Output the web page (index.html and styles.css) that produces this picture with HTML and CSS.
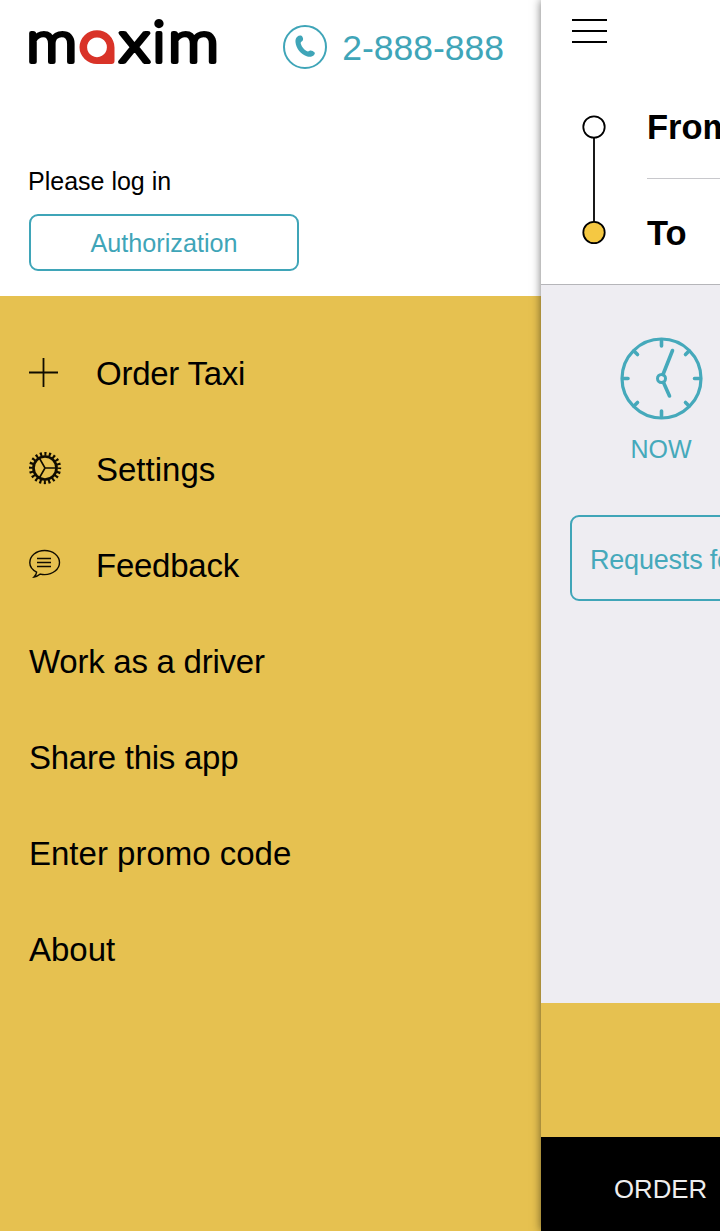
FILE: index.html
```html
<!DOCTYPE html>
<html lang="en">
<head>
    <meta charset="UTF-8">
    <meta name="viewport" content="width=device-width, initial-scale=1.0">
    <title>maxim</title>
    <link rel="stylesheet" href="styles.css">
</head>
<body>
    <div class="app">
        <aside class="sidebar">
            <header class="top">
                <div class="brand">
                    <svg class="logo" width="192" height="78" viewBox="0 -14 192 78">
                        <g class="logo-text">
                            <text x="-1.800" y="46" textLength="51" lengthAdjust="spacingAndGlyphs">m</text>
                            <text x="91" y="46" textLength="31" lengthAdjust="spacingAndGlyphs">x</text>
                            <text x="124.500" y="46">i</text>
                            <text x="140" y="46" textLength="51" lengthAdjust="spacingAndGlyphs">m</text>
                        </g>
                        <path fill="#d93328" fill-rule="evenodd" d="M69 14.300a17.500 17.200 0 0 1 17.500 17.200V45q0 3-3 3H69a17.500 16.850 0 0 1 0-33.700zM69 21.400a9.900 9.900 0 1 0 .01 0z"/>
                    </svg>
                    <a class="phone" href="#">
                        <svg width="44" height="44" viewBox="0 0 44 44">
                            <circle cx="22" cy="22" r="21" fill="none" stroke="#3fa5b8" stroke-width="2"/>
                            <path fill="#3fa5b8" d="M14 12c2-1.900 4.500-1.900 5.500-.1 1 1.800.8 3.600-.8 4.500-1 .6-1.200 1.300-.8 2.500 1 3 3 5.400 5.700 7.100 1 .6 1.800.5 2.600 0 1.200-.8 2.300-.6 3.500.1l1.300.8c1.200.7 1 1.900.2 2.900-1.600 2-4.300 2.500-6.900 1.700-6.400-2-11.200-8-11.800-14.300-.2-2 .2-4.100 1.500-5.200z"/>
                        </svg>
                        <span>2-888-888</span>
                    </a>
                </div>
                <p class="hint">Please log in</p>
                <button class="auth">Authorization</button>
            </header>
            <nav>
                <ul class="menu">
                    <li class="tight">
                        <svg class="icon" width="34" height="34" viewBox="0 0 34 34">
                            <path d="M0 16.500h29M14.500 2v29" fill="none" stroke="#100c00" stroke-width="1.800"/>
                        </svg>
                        Order Taxi
                    </li>
                    <li>
                        <svg class="icon" width="34" height="34" viewBox="0 0 34 34">
                            <g fill="none" stroke="#100c00">
                                <circle cx="16" cy="16" r="14.200" stroke-width="3.900" stroke-dasharray="2.100 2.361" stroke-dashoffset="1.050"/>
                                <circle cx="16" cy="16" r="11.500" stroke-width="2.700"/>
                                <path d="M16 16h11.500M16 16l-5.700-10M16 16l-5.700 10" stroke-width="1.600"/>
                            </g>
                        </svg>
                        Settings
                    </li>
                    <li class="tight">
                        <svg class="icon" width="34" height="34" viewBox="0 0 34 34">
                            <g fill="none" stroke="#100c00" stroke-width="1.400">
                                <path d="M7.600 24.200C3.500 22 .8 18.500.8 14.800.8 7.800 7.300 2.500 15.600 2.500s14.900 5.300 14.900 12-6.600 12.100-14.900 12.100c-1.500 0-3-.2-4.300-.5-1.800 1.600-4 2.600-6.300 2.900 1.400-1.400 2.400-2.900 2.600-4.800z"/>
                                <path d="M8 10.500h14M8 14.500h14M8 18.500h14"/>
                            </g>
                        </svg>
                        Feedback
                    </li>
                    <li class="tight">Work as a driver</li>
                    <li class="tight">Share this app</li>
                    <li>Enter promo code</li>
                    <li>About</li>
                </ul>
            </nav>
        </aside>

        <main class="page">
            <section class="route">
                <div class="burger">
                    <span></span>
                    <span></span>
                    <span></span>
                </div>
                <div class="points">
                    <svg width="24" height="132" viewBox="0 0 24 132">
                        <g stroke="#000" stroke-width="1.800">
                            <path d="M12 24v84"/>
                            <circle cx="12" cy="13" r="10.700" fill="#fff"/>
                            <circle cx="12" cy="118.500" r="10.700" fill="#f5c842"/>
                        </g>
                    </svg>
                    <div class="fields">
                        <div class="field">From</div>
                        <div class="field">To</div>
                    </div>
                </div>
            </section>
            <section class="options">
                <div class="when">
                    <svg width="84" height="84" viewBox="0 0 84 84">
                        <g fill="none" stroke="#45a9bb" stroke-width="3.600" stroke-linecap="round">
                            <circle cx="42.500" cy="41.500" r="39.500" stroke-width="3.200"/>
                            <path d="M42.500 4v5M42.500 74v5M4 41.500h5M75.500 41.500h5M15 14l3.500 3.500M70 14l-3.500 3.500M15 69l3.500-3.500M70 69l-3.500-3.500"/>
                            <circle cx="42.500" cy="41.500" r="4" stroke-width="3"/>
                            <path d="M44 37.500l9.500-24M44.500 45.500l6 13.500"/>
                        </g>
                    </svg>
                    <span>NOW</span>
                </div>
                <div class="requests">Requests for driver</div>
            </section>
            <section class="price"></section>
            <footer class="order">ORDER</footer>
        </main>
    </div>
</body>
</html>
```

FILE: styles.css
```css
* {
    box-sizing: border-box;
}

body {
    margin: 0;
    font-family: "Liberation Sans", Arial, sans-serif;
    color: #000;
}

.app {
    display: flex;
    width: 720px;
    height: 1231px;
    overflow: hidden;
}

.sidebar {
    width: 541px;
    flex: none;
    background-color: #e6c150;
}

.top {
    height: 296px;
    padding: 16px 37px 0 28px;
    background-color: #fff;
}

.brand {
    display: flex;
    justify-content: space-between;
    height: 54px;
}

.logo {
    margin-top: -14px;
    overflow: visible;
}

.logo-text {
    font-family: Lato, sans-serif;
    font-size: 58px;
    font-weight: 300;
    stroke: #000;
    stroke-width: 4.2px;
    stroke-linejoin: round;
}

.phone {
    display: flex;
    gap: 15px;
    height: 44px;
    margin-top: 9px;
    font-size: 35.5px;
    line-height: 46px;
    color: #3fa5b8;
    text-decoration: none;
}

.hint {
    margin: 96px 0 0;
    font-size: 25px;
    line-height: 30px;
}

.auth {
    display: block;
    width: 270px;
    height: 57px;
    margin: 18px 0 0 1px;
    border: 2px solid #3fa5b8;
    border-radius: 9px;
    background-color: #fff;
    font-family: inherit;
    font-size: 25.2px;
    line-height: 53px;
    color: #3fa5b8;
}

.menu {
    margin: 0;
    padding: 30px 0 0 29px;
    list-style: none;
}

.menu li {
    display: flex;
    align-items: center;
    height: 96px;
    font-size: 33px;
}

.menu .tight {
    letter-spacing: -0.25px;
}

.icon {
    margin: -2px 33px 0 0;
}

.page {
    position: relative;
    display: flex;
    flex: none;
    flex-direction: column;
    width: 640px;
    box-shadow: 0 0 9px rgba(0, 0, 0, 0.55);
}

.route {
    height: 285px;
    padding: 19px 0 0 31px;
    border-bottom: 1px solid #b5b5b9;
    background-color: #fff;
}

.burger {
    display: grid;
    gap: 9px;
    width: 35px;
}

.burger span {
    height: 2px;
    background-color: #000;
}

.points {
    display: flex;
    gap: 41px;
    margin: 30px 0 0 10px;
}

.points svg {
    margin-top: 41px;
}

.fields {
    flex: 1;
}

.field {
    height: 106px;
    font-size: 34.5px;
    font-weight: bold;
    line-height: 108px;
}

.field:first-child {
    border-bottom: 1px solid #c8c8cc;
}

.options {
    height: 718px;
    padding: 52px 0 0 29px;
    background-color: #eeedf2;
    color: #45a9bb;
}

.when {
    display: flex;
    flex-direction: column;
    align-items: center;
    width: 84px;
    margin-left: 49px;
    font-size: 25px;
    line-height: 30px;
}

.when span {
    margin-top: 13px;
}

.requests {
    height: 86px;
    margin-top: 51px;
    padding-left: 18px;
    border: 2px solid #3fa5b8;
    border-radius: 9px;
    font-size: 27px;
    line-height: 86px;
    letter-spacing: -0.2px;
}

.price {
    height: 134px;
    background-color: #e6c150;
}

.order {
    height: 94px;
    padding-left: 73px;
    background-color: #000;
    font-size: 25.8px;
    line-height: 104px;
    color: #eee;
}
```
